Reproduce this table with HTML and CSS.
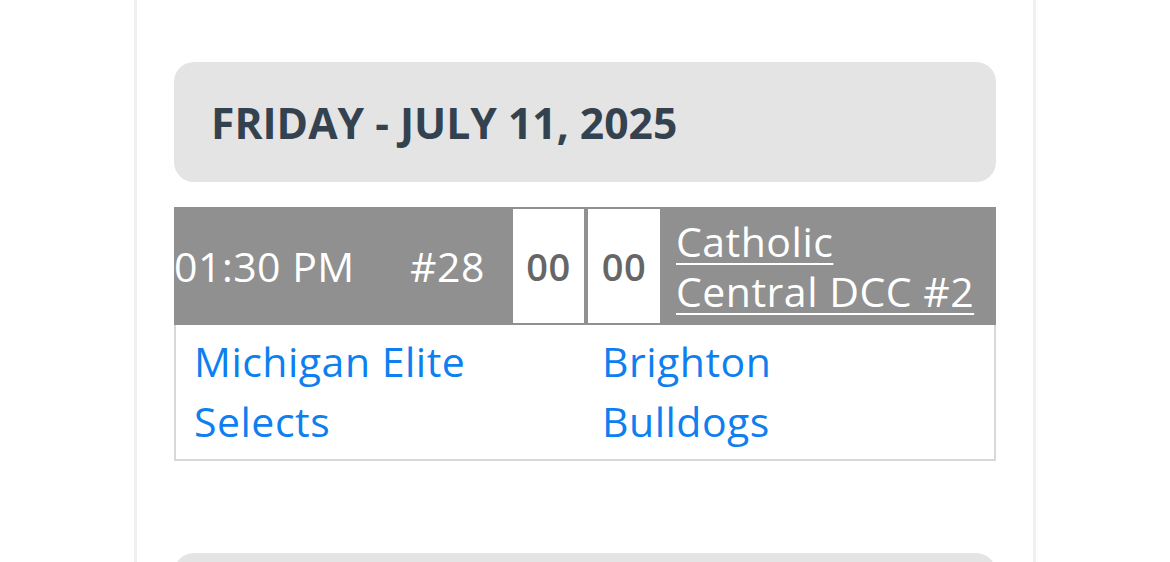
FILE: index.html
```html
<!DOCTYPE html>
<html lang="en">
<head>
<meta charset="utf-8">
<title>Schedule</title>
<link rel="stylesheet" href="styles.css">
</head>
<body>
<div class="card">
  <section class="day">
    <h2 class="day-title">FRIDAY - JULY 11, 2025</h2>
  </section>
  <div class="game">
    <div class="game-bar">
      <span class="time">01:30 PM</span>
      <span class="num">#28</span>
      <span class="score">00</span>
      <span class="score">00</span>
      <a class="loc" href="#">Catholic Central DCC #2</a>
    </div>
    <div class="teams">
      <a class="team" href="#">Michigan Elite Selects</a>
      <a class="team" href="#">Brighton Bulldogs</a>
    </div>
  </div>
  <section class="day next"></section>
</div>
</body>
</html>
```

FILE: styles.css
```css
html, body {
  margin: 0;
  padding: 0;
  background: #ffffff;
  height: 562px;
  overflow: hidden;
}
body {
  font-family: "Open Sans", "Liberation Sans", sans-serif;
}
.card {
  width: 902px;
  margin: 0 auto;
  border-left: 3px solid #f0f0f0;
  border-right: 3px solid #f0f0f0;
  padding: 62px 37px 0 37px;
  box-sizing: border-box;
  height: 562px;
  overflow: hidden;
}
.day {
  background: #e4e4e4;
  border-radius: 20px;
  height: 120px;
  display: flex;
  align-items: center;
  padding: 0 37px;
  box-sizing: border-box;
}
.day-title {
  margin: 0;
  font-size: 42.6px;
  font-weight: 700;
  color: #34424f;
}
.game {
  margin-top: 25px;
}
.game-bar {
  background: #909090;
  display: flex;
  align-items: stretch;
  padding: 2px 0;
  height: 118px;
  box-sizing: border-box;
  color: #ffffff;
  font-size: 41px;
  letter-spacing: 0.5px;
}
.time {
  width: 236px;
  display: flex;
  align-items: center;
}
.num {
  width: 103px;
  display: flex;
  align-items: center;
}
.score {
  width: 71px;
  background: #ffffff;
  color: #666666;
  font-weight: 600;
  font-size: 38px;
  letter-spacing: 0.5px;
  display: flex;
  align-items: center;
  justify-content: center;
  margin-right: 4px;
}
.score + .score {
  margin-right: 0;
  width: 72px;
}
.loc {
  flex: 1;
  color: #ffffff;
  text-decoration: underline;
  text-decoration-thickness: 2px;
  text-underline-offset: 6px;
  line-height: 50px;
  padding: 0 17px 0 16px;
  align-self: center;
}
.teams {
  display: grid;
  grid-template-columns: 408px 1fr;
  border: 2px solid #d8d8d8;
  border-top: 0;
  padding: 6px 0 8px;
  font-size: 41px;
  letter-spacing: 0.5px;
  line-height: 60px;
}
.team {
  color: #0d7ff0;
  text-decoration: none;
  padding-left: 18px;
  max-width: 320px;
}
.next {
  margin-top: 92px;
}
```
